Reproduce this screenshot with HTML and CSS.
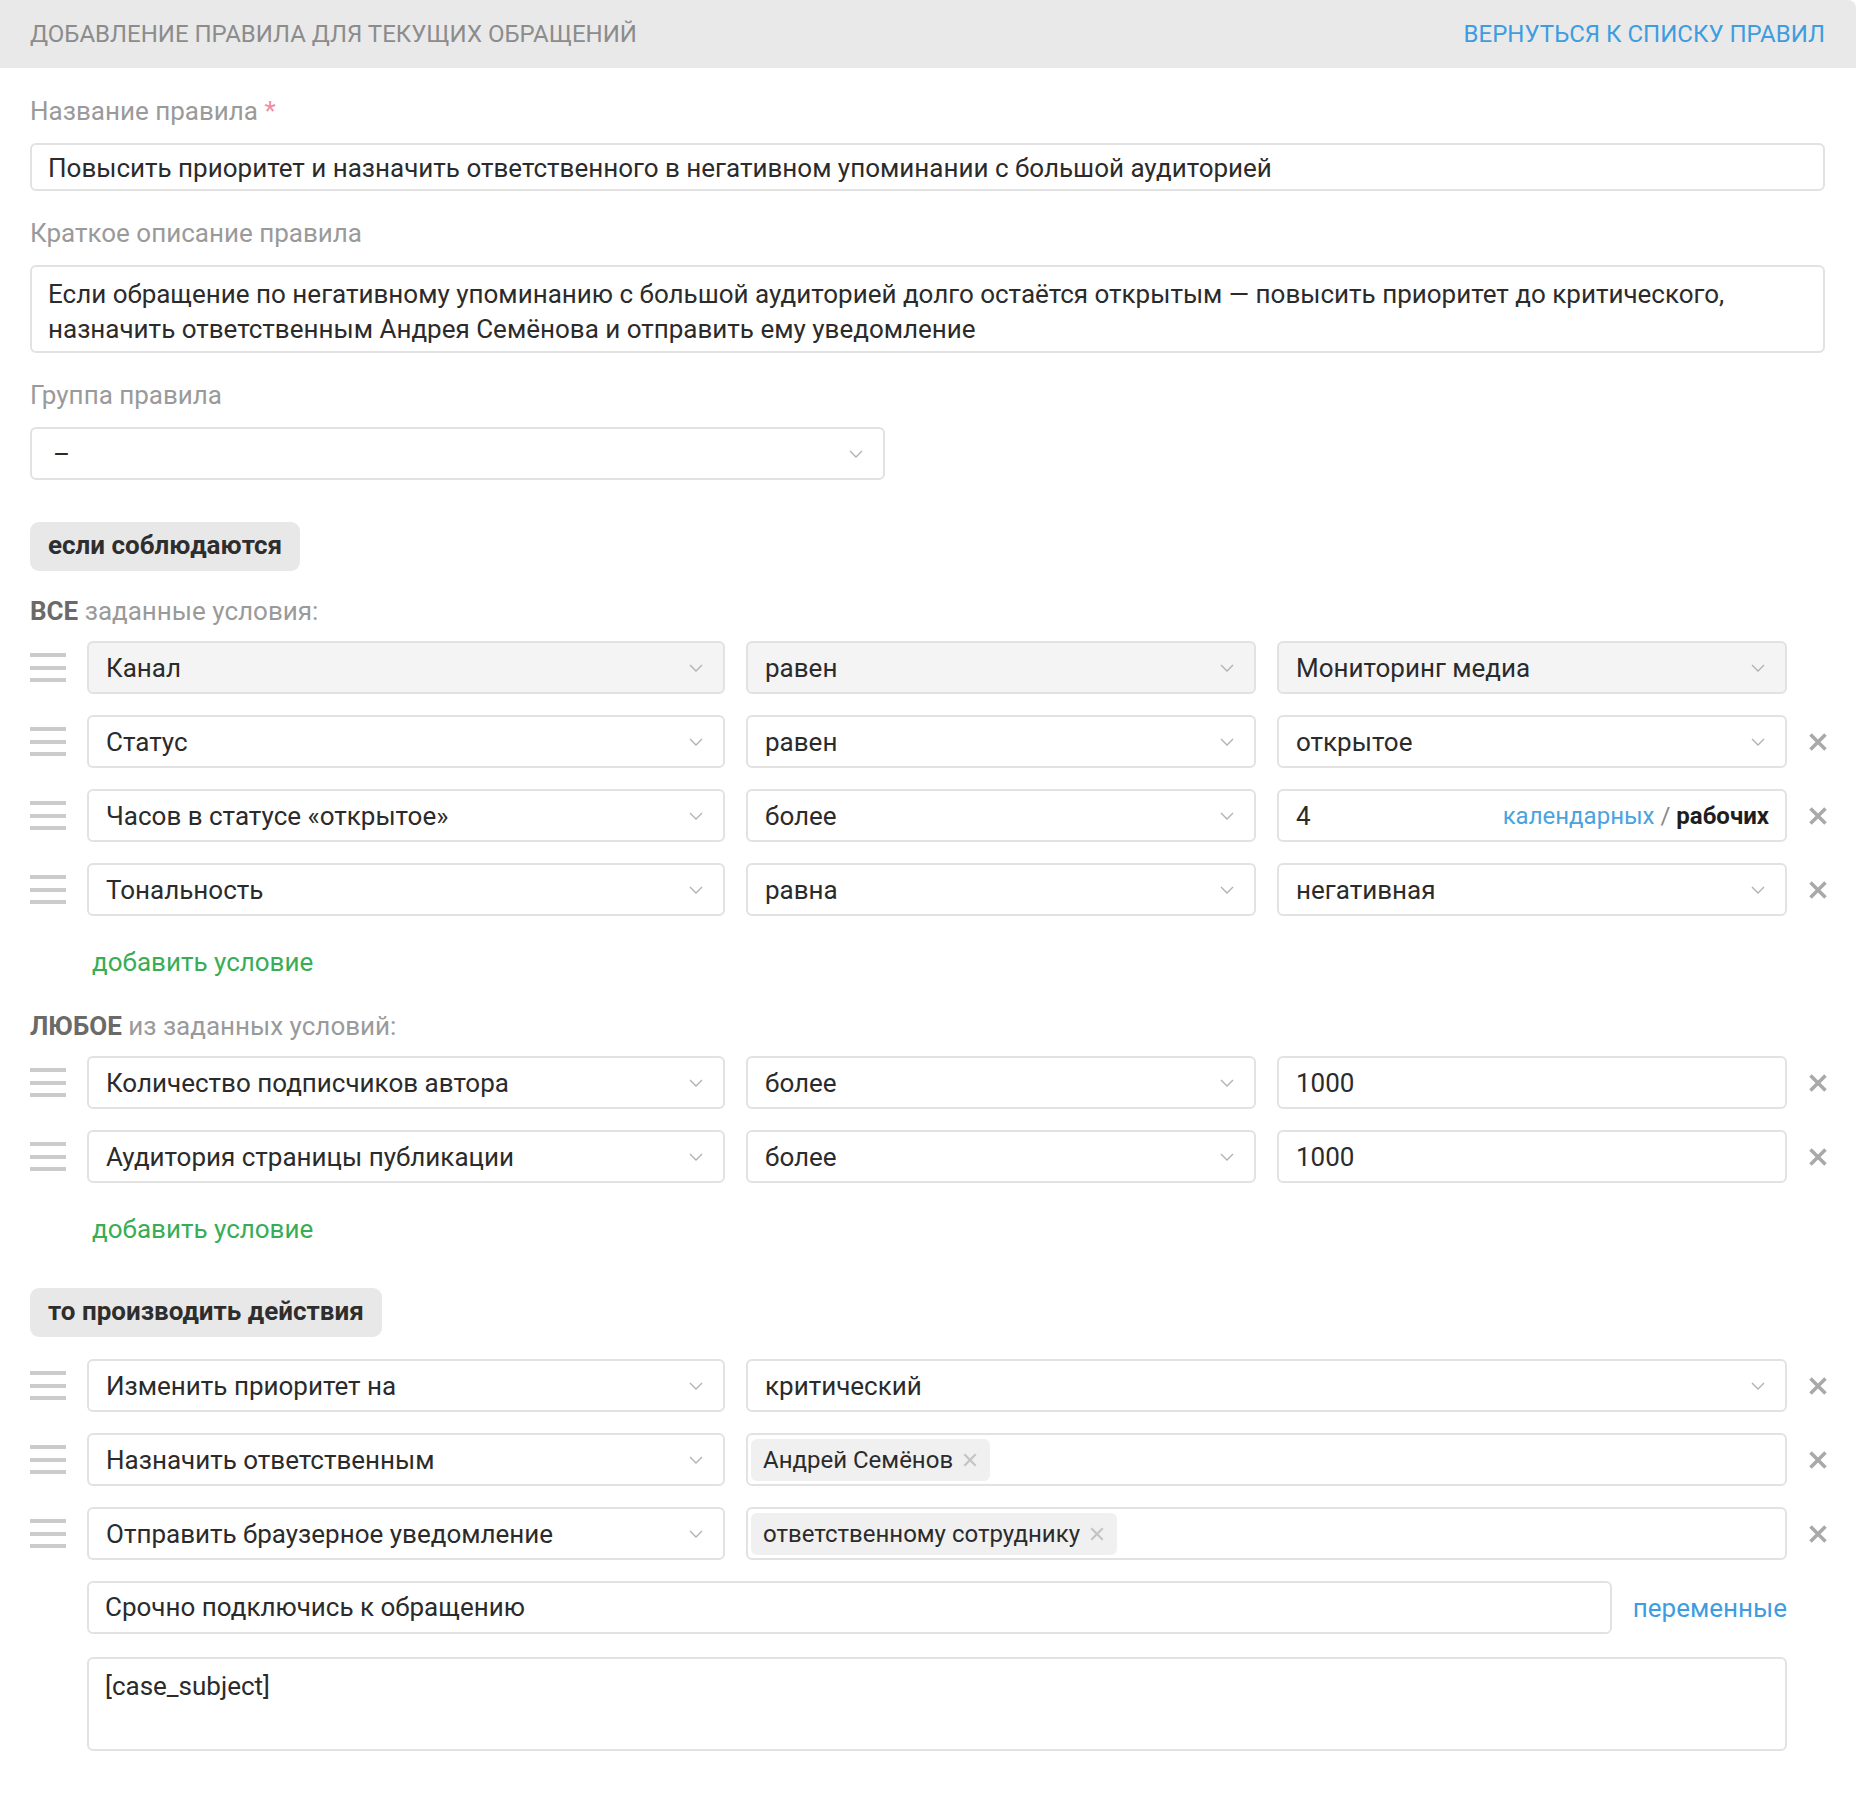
FILE: index.html
```html
<!DOCTYPE html>
<html lang="ru">
<head>
    <meta charset="UTF-8">
    <meta name="viewport" content="width=device-width, initial-scale=1.0">
    <title>Добавление правила</title>
    <link rel="stylesheet" href="styles.css">
</head>
<body>
    <div class="topbar">
        <span class="topbar-title">ДОБАВЛЕНИЕ ПРАВИЛА ДЛЯ ТЕКУЩИХ ОБРАЩЕНИЙ</span>
        <a class="topbar-link" href="#">ВЕРНУТЬСЯ К СПИСКУ ПРАВИЛ</a>
    </div>

    <div class="form">
        <div class="field-label">Название правила <span class="required">*</span></div>
        <div class="input">Повысить приоритет и назначить ответственного в негативном упоминании с большой аудиторией</div>

        <div class="field-label">Краткое описание правила</div>
        <div class="textarea description">Если обращение по негативному упоминанию с большой аудиторией долго остаётся открытым — повысить приоритет до критического, назначить ответственным Андрея Семёнова и отправить ему уведомление</div>

        <div class="field-label">Группа правила</div>
        <div class="select group-select">
            <span>–</span>
            <svg class="chevron" viewBox="0 0 14 8"><polyline points="1,1 7,7 13,1"/></svg>
        </div>

        <div class="block-title first">если соблюдаются</div>

        <div class="cond-title"><b>ВСЕ</b> заданные условия:</div>
        <div class="rows">
            <div class="handle"><i></i><i></i><i></i></div>
            <div class="select muted"><span>Канал</span><svg class="chevron" viewBox="0 0 14 8"><polyline points="1,1 7,7 13,1"/></svg></div>
            <div class="select muted"><span>равен</span><svg class="chevron" viewBox="0 0 14 8"><polyline points="1,1 7,7 13,1"/></svg></div>
            <div class="select muted"><span>Мониторинг медиа</span><svg class="chevron" viewBox="0 0 14 8"><polyline points="1,1 7,7 13,1"/></svg></div>
            <div></div>

            <div class="handle"><i></i><i></i><i></i></div>
            <div class="select"><span>Статус</span><svg class="chevron" viewBox="0 0 14 8"><polyline points="1,1 7,7 13,1"/></svg></div>
            <div class="select"><span>равен</span><svg class="chevron" viewBox="0 0 14 8"><polyline points="1,1 7,7 13,1"/></svg></div>
            <div class="select"><span>открытое</span><svg class="chevron" viewBox="0 0 14 8"><polyline points="1,1 7,7 13,1"/></svg></div>
            <div class="remove"><svg viewBox="0 0 20 20"><path d="M2.5 2.5L17.5 17.5M17.5 2.5L2.5 17.5"/></svg></div>

            <div class="handle"><i></i><i></i><i></i></div>
            <div class="select"><span>Часов в статусе «открытое»</span><svg class="chevron" viewBox="0 0 14 8"><polyline points="1,1 7,7 13,1"/></svg></div>
            <div class="select"><span>более</span><svg class="chevron" viewBox="0 0 14 8"><polyline points="1,1 7,7 13,1"/></svg></div>
            <div class="select hours">
                <span>4</span>
                <span class="hours-mode"><a href="#">календарных</a> <span class="slash">/</span> <b>рабочих</b></span>
            </div>
            <div class="remove"><svg viewBox="0 0 20 20"><path d="M2.5 2.5L17.5 17.5M17.5 2.5L2.5 17.5"/></svg></div>

            <div class="handle"><i></i><i></i><i></i></div>
            <div class="select"><span>Тональность</span><svg class="chevron" viewBox="0 0 14 8"><polyline points="1,1 7,7 13,1"/></svg></div>
            <div class="select"><span>равна</span><svg class="chevron" viewBox="0 0 14 8"><polyline points="1,1 7,7 13,1"/></svg></div>
            <div class="select"><span>негативная</span><svg class="chevron" viewBox="0 0 14 8"><polyline points="1,1 7,7 13,1"/></svg></div>
            <div class="remove"><svg viewBox="0 0 20 20"><path d="M2.5 2.5L17.5 17.5M17.5 2.5L2.5 17.5"/></svg></div>
        </div>
        <a class="add-link" href="#">добавить условие</a>

        <div class="cond-title"><b>ЛЮБОЕ</b> из заданных условий:</div>
        <div class="rows">
            <div class="handle"><i></i><i></i><i></i></div>
            <div class="select"><span>Количество подписчиков автора</span><svg class="chevron" viewBox="0 0 14 8"><polyline points="1,1 7,7 13,1"/></svg></div>
            <div class="select"><span>более</span><svg class="chevron" viewBox="0 0 14 8"><polyline points="1,1 7,7 13,1"/></svg></div>
            <div class="select"><span>1000</span></div>
            <div class="remove"><svg viewBox="0 0 20 20"><path d="M2.5 2.5L17.5 17.5M17.5 2.5L2.5 17.5"/></svg></div>

            <div class="handle"><i></i><i></i><i></i></div>
            <div class="select"><span>Аудитория страницы публикации</span><svg class="chevron" viewBox="0 0 14 8"><polyline points="1,1 7,7 13,1"/></svg></div>
            <div class="select"><span>более</span><svg class="chevron" viewBox="0 0 14 8"><polyline points="1,1 7,7 13,1"/></svg></div>
            <div class="select"><span>1000</span></div>
            <div class="remove"><svg viewBox="0 0 20 20"><path d="M2.5 2.5L17.5 17.5M17.5 2.5L2.5 17.5"/></svg></div>
        </div>
        <a class="add-link" href="#">добавить условие</a>

        <div class="block-title second">то производить действия</div>

        <div class="rows actions">
            <div class="handle"><i></i><i></i><i></i></div>
            <div class="select"><span>Изменить приоритет на</span><svg class="chevron" viewBox="0 0 14 8"><polyline points="1,1 7,7 13,1"/></svg></div>
            <div class="select wide"><span>критический</span><svg class="chevron" viewBox="0 0 14 8"><polyline points="1,1 7,7 13,1"/></svg></div>
            <div class="remove"><svg viewBox="0 0 20 20"><path d="M2.5 2.5L17.5 17.5M17.5 2.5L2.5 17.5"/></svg></div>

            <div class="handle"><i></i><i></i><i></i></div>
            <div class="select"><span>Назначить ответственным</span><svg class="chevron" viewBox="0 0 14 8"><polyline points="1,1 7,7 13,1"/></svg></div>
            <div class="select wide tags">
                <span class="chip">Андрей Семёнов <svg viewBox="0 0 14 14"><path d="M2 2L12 12M12 2L2 12"/></svg></span>
            </div>
            <div class="remove"><svg viewBox="0 0 20 20"><path d="M2.5 2.5L17.5 17.5M17.5 2.5L2.5 17.5"/></svg></div>

            <div class="handle"><i></i><i></i><i></i></div>
            <div class="select"><span>Отправить браузерное уведомление</span><svg class="chevron" viewBox="0 0 14 8"><polyline points="1,1 7,7 13,1"/></svg></div>
            <div class="select wide tags">
                <span class="chip">ответственному сотруднику <svg viewBox="0 0 14 14"><path d="M2 2L12 12M12 2L2 12"/></svg></span>
            </div>
            <div class="remove"><svg viewBox="0 0 20 20"><path d="M2.5 2.5L17.5 17.5M17.5 2.5L2.5 17.5"/></svg></div>

            <div class="notify">
                <div class="notify-head">
                    <div class="input notify-title">Срочно подключись к обращению</div>
                    <a class="vars-link" href="#">переменные</a>
                </div>
                <div class="textarea notify-body">[case_subject]</div>
            </div>
        </div>
    </div>
</body>
</html>
```

FILE: styles.css
```css
body {
    margin: 0;
    padding: 0;
    background-color: #ffffff;
    font-family: Roboto, "Liberation Sans", sans-serif;
    font-size: 26px;
    color: #333;
}

a {
    text-decoration: none;
}

/* top bar */
.topbar {
    height: 68px;
    display: flex;
    align-items: center;
    justify-content: space-between;
    padding: 0 31px 0 30px;
    background-color: #e9e9e9;
    border-radius: 0 8px 0 0;
    font-size: 24px;
}

.topbar-title {
    color: #8c8c8c;
}

.topbar-link {
    color: #3d9de0;
}

/* form */
.form {
    padding: 25px 31px 40px 30px;
}

.field-label {
    line-height: 36px;
    color: #9a9a9a;
    margin-bottom: 14px;
}

.required {
    color: #f08ca0;
}

.input,
.textarea,
.select {
    box-sizing: border-box;
    border: 2px solid #e2e2e2;
    border-radius: 6px;
    background-color: #ffffff;
    color: #2b2b2b;
}

.input {
    height: 48px;
    line-height: 46px;
    padding: 0 16px;
    margin-bottom: 24px;
}

.textarea {
    padding: 10px 16px;
    line-height: 35px;
}

.description {
    height: 88px;
    margin-bottom: 24px;
}

.select {
    height: 53px;
    display: flex;
    align-items: center;
    justify-content: space-between;
    padding: 0 20px 0 17px;
    white-space: nowrap;
}

.select.muted {
    background-color: #f4f4f4;
}

.chevron {
    width: 14px;
    height: 8px;
    fill: none;
    stroke: #b0b0b0;
    stroke-width: 1.3;
    flex-shrink: 0;
}

.group-select {
    width: 855px;
    margin-bottom: 42px;
}

.group-select span {
    padding-left: 4px;
}

/* section buttons */
.block-title {
    display: inline-block;
    height: 49px;
    line-height: 47px;
    padding: 0 18px;
    border-radius: 9px;
    background-color: #e8e8e8;
    font-weight: bold;
    color: #2e2e2e;
}

.block-title.second {
    margin-top: 41px;
}

.cond-title {
    line-height: 36px;
    color: #9a9a9a;
    margin-top: 22px;
    margin-bottom: 12px;
}

.cond-title b {
    color: #6a6a6a;
}

.add-link + .cond-title {
    margin-top: 28px;
}

/* condition and action rows */
.rows {
    display: grid;
    grid-template-columns: 36px 638px 510px 510px 1fr;
    column-gap: 21px;
    row-gap: 21px;
    align-items: center;
}

.actions {
    margin-top: 22px;
}

.handle {
    display: flex;
    flex-direction: column;
    gap: 8.5px;
}

.handle i {
    display: block;
    height: 4px;
    background-color: #cbcbcb;
}

.remove {
    display: flex;
    justify-content: flex-end;
    padding-right: 4px;
}

.remove svg {
    width: 20px;
    height: 20px;
    flex-shrink: 0;
    fill: none;
    stroke: #a9a9a9;
    stroke-width: 3.6;
}

.hours {
    padding-right: 16px;
}

.hours-mode {
    font-size: 24px;
}

.hours-mode a {
    color: #49a3e0;
}

.hours-mode .slash {
    color: #888;
}

.hours-mode b {
    color: #1e1e1e;
}

.wide {
    grid-column: span 2;
}

.tags {
    justify-content: flex-start;
    padding: 0 3px;
}

.chip {
    display: inline-flex;
    align-items: center;
    height: 42px;
    padding: 0 12px 0 12px;
    gap: 9px;
    border-radius: 6px;
    background-color: #f0f0f0;
    color: #2b2b2b;
    font-size: 24px;
}

.chip svg {
    width: 16px;
    height: 16px;
    fill: none;
    stroke: #c4c4c4;
    stroke-width: 2;
}

.add-link {
    display: block;
    line-height: 36px;
    margin-top: 28px;
    padding-left: 62px;
    color: #37ad56;
}

/* notification text under the last action */
.notify {
    grid-column: 2 / 5;
    display: flex;
    flex-direction: column;
    gap: 23px;
}

.notify-head {
    display: flex;
    align-items: center;
    gap: 21px;
}

.notify-title {
    flex: 1;
    height: 53px;
    line-height: 49px;
    margin-bottom: 0;
}

.vars-link {
    color: #3d9de0;
}

.notify-body {
    height: 94px;
}
```
